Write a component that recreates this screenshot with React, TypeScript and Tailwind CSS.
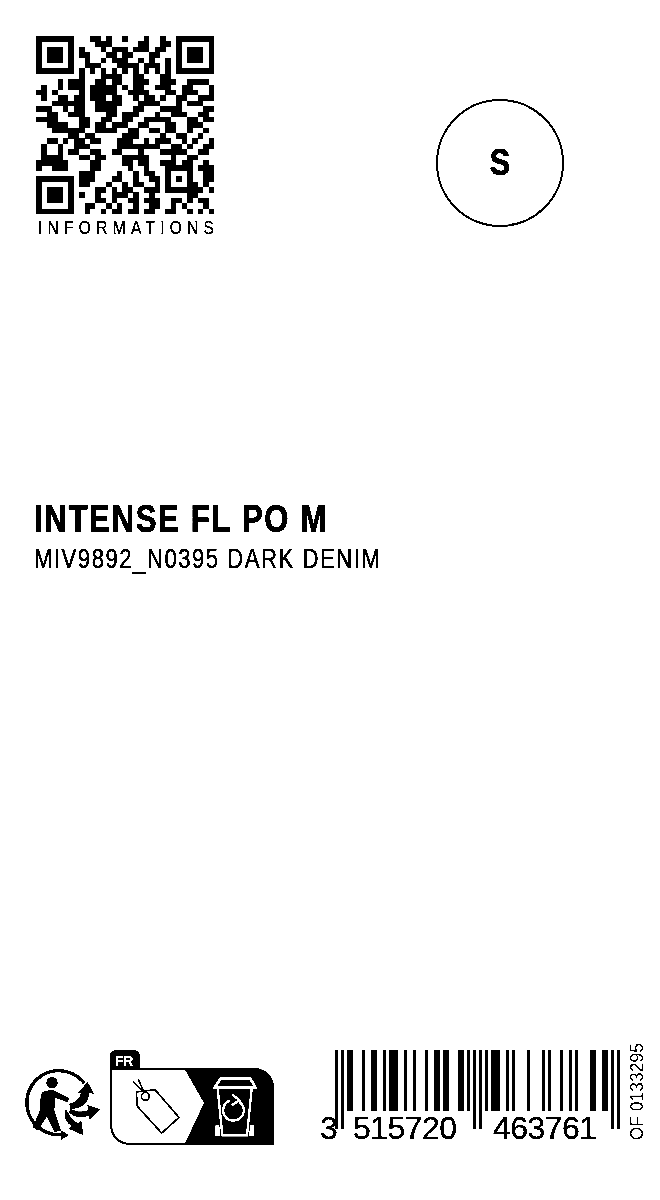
const QR_ROWS = [
  "111111100011010010001001001111111",
  "100000100001110000011001101000001",
  "101110101000101110111011001011101",
  "101110101100011011000110001011101",
  "101110100100101110010100101011101",
  "100000100111000111101110101000001",
  "111111101010101010101010101111111",
  "000000001000111100110001100000000",
  "000010111001101100111001110011110",
  "010010111011111010110011100110001",
  "110100001011111001111000110111001",
  "010011011011101100101101001100111",
  "000111111001111100011110001011100",
  "111001011001111000110001111000011",
  "001100111000011011100010011100110",
  "111100001100110011001111100011011",
  "001111001101101110011000110011100",
  "000111111001111001100110110010010",
  "000000110110000011100001001100100",
  "001101011011000111001011100101001",
  "010010011100000111111110011010011",
  "010010110011001100010001111100110",
  "011110001101100011111000010011000",
  "111111000011000011011001110110010",
  "100111000011000001001000111110111",
  "000000001110000100101100100010011",
  "111111101110001100100110101010011",
  "100000101100010010110010100011010",
  "101110100001101011001110111111101",
  "101110101001001110100100000011000",
  "101110100001101001101110011010110",
  "100000100110010100100110010100010",
  "111111100100101101101100110010101",
];

// EAN-13 modules for 3515720463761
const EAN =
  "101" +
  "0110001" + "0011001" + "0111001" + "0010001" + "0011011" + "0001101" +
  "01010" +
  "1011100" + "1010000" + "1000010" + "1000100" + "1010000" + "1100110" +
  "101";
const LONG = [0, 2, 46, 48, 92, 94];

function QrCode() {
  return (
    <svg width="178" height="178" viewBox="0 0 33 33" shapeRendering="crispEdges" className="block">
      {QR_ROWS.map((row, y) =>
        row.split("").map((c, x) => (c === "1" ? <rect key={`${x}-${y}`} x={x} y={y} width="1.02" height="1.02" fill="#000" /> : null))
      )}
    </svg>
  );
}

function Triman() {
  return (
    <svg width="90" height="85" viewBox="0 0 270 255" className="block">
      <path d="M193 70 A96 96 0 1 0 125 223.6" fill="none" stroke="#000" strokeWidth="10" />
      <path d="M122 210 L147 226 L122 240 Z" fill="#000" />
      <circle cx="96" cy="68" r="17" fill="#000" />
      <path d="M62 104 Q68 90 100 90 L148 114 L143 127 L106 114 L103 150 L123 212 L103 216 L80 170 L54 212 L38 202 L60 150 Z" fill="#000" />
      <path d="M148 130 C168 128 180 114 182 98 L172 100 L203 66 L222 102 L208 98 C208 124 186 148 150 146 Z" fill="#000" />
      <path d="M152 146 C172 158 190 156 204 150 L202 134 L240 148 L208 180 L208 166 C186 178 160 172 146 156 Z" fill="#000" />
      <path d="M140 150 C150 170 160 182 174 190 L184 182 L190 226 L146 206 L156 198 C140 190 130 172 136 150 Z" fill="#000" />
    </svg>
  );
}

function InfoTri() {
  return (
    <svg width="175" height="100" viewBox="0 0 525 300" className="block">
      <path d="M14 60 V28 Q14 6 36 6 H84 Q105 6 105 28 V60 H440 Q508 60 508 130 V292 H84 Q14 292 14 222 Z" fill="#000" />
      <path d="M20 65 H240 L297 165 L240 286 H84 Q20 286 20 220 Z" fill="#fff" />
      <text x="29" y="54" fontFamily="Liberation Sans, sans-serif" fontWeight="700" fontSize="42" fill="#fff" textLength="56" lengthAdjust="spacingAndGlyphs">FR</text>
      <path d="M94 132 L150 125 L222 208 L170 255 L97 175 Z" fill="none" stroke="#000" strokeWidth="5" />
      <circle cx="121" cy="145" r="12" fill="none" stroke="#000" strokeWidth="5" />
      <path d="M114 130 L84 100 M114 126 L100 94" stroke="#000" strokeWidth="5" fill="none" />
      <path d="M347 92 H436 L451 118 H329 Z" fill="none" stroke="#fff" strokeWidth="8" />
      <path d="M338 122 L352 262 H426 L440 122" fill="none" stroke="#fff" strokeWidth="7" />
      <path d="M331 232 H343 L346 264 H331 Z M447 232 H435 L432 264 H447 Z" fill="#fff" />
      <path d="M404 162 A31 31 0 1 1 374 158" fill="none" stroke="#fff" strokeWidth="7" />
      <path d="M382 140 L404 157 L380 172" fill="none" stroke="#fff" strokeWidth="7" />
    </svg>
  );
}

function Barcode() {
  const font = { fontFamily: "Liberation Sans, sans-serif", fontSize: 32, stroke: "#000", strokeWidth: 0.3 };
  return (
    <svg width="300" height="100" viewBox="0 0 300 100" shapeRendering="crispEdges" className="block">
      {EAN.split("").map((m, i) =>
        m === "1" ? (
          <rect key={i} x={15 + i * 3} y="0" width="3" height={LONG.includes(i) ? 79 : 61} fill="#000" />
        ) : null
      )}
      <text x="0" y="89" {...font}>3</text>
      <text x="33" y="89" {...font} textLength="104">515720</text>
      <text x="173" y="89" {...font} textLength="104">463761</text>
    </svg>
  );
}

export default function App() {
  return (
    <div className="w-[660px] h-[1200px] overflow-hidden bg-white text-black flex flex-col contrast-[40] [font-family:'Liberation_Sans',sans-serif]">
      <div className="flex items-start pt-[36px] pl-[36px]">
        <div className="w-[178px] flex flex-col">
          <QrCode />
          <div className="mt-[5px] text-[19px] leading-[18px] tracking-[6.4px] whitespace-nowrap ml-[2px] origin-left scale-x-[0.82] [-webkit-text-stroke:0.3px_black]">INFORMATIONS</div>
        </div>
        <div className="ml-[222px] mt-[63px] w-[128px] h-[128px] rounded-full border-2 border-black flex items-center justify-center text-[36px] font-bold">
          <span className="inline-block scale-x-[0.85] [-webkit-text-stroke:0.8px_black]">S</span>
        </div>
      </div>
      <div className="pl-[34px] mt-[260px] flex flex-col">
        <h1 className="text-[38px] leading-[44px] font-bold tracking-[2px] whitespace-nowrap origin-left scale-x-[0.82] [-webkit-text-stroke:0.6px_black]">INTENSE FL PO M</h1>
        <p className="mt-[2px] text-[27px] leading-[32px] tracking-[1.83px] whitespace-nowrap origin-left scale-x-[0.82] [-webkit-text-stroke:0.4px_black]">MIV9892_N0395 DARK DENIM</p>
      </div>
      <div className="mt-auto pb-[50px] pl-[20px] flex items-end">
        <div className="mb-[5px]"><Triman /></div>
        <div className="ml-[-5px] mb-[2px]"><InfoTri /></div>
        <div className="ml-[40px]"><Barcode /></div>
        <div className="ml-[8px] mb-[10px] [writing-mode:vertical-rl] rotate-180 text-[17.5px] leading-[18px] whitespace-nowrap">OF 0133295</div>
      </div>
    </div>
  );
}
